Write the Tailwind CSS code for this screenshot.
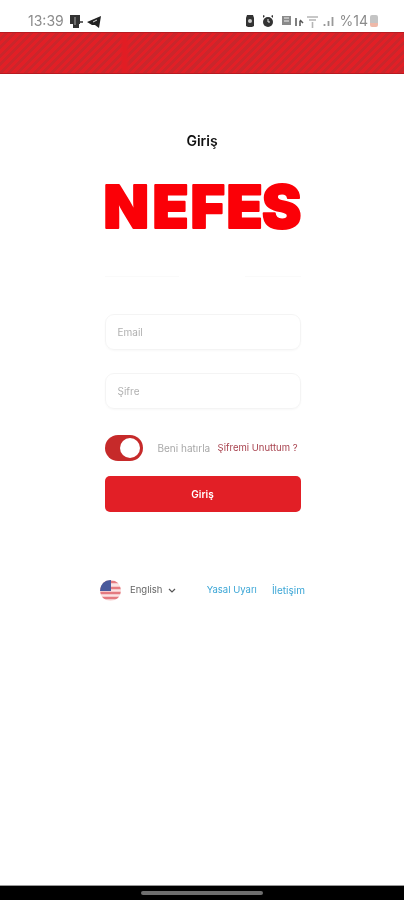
<!DOCTYPE html>
<html lang="en">
<head>
    <meta charset="UTF-8">
    <meta name="viewport" content="width=device-width, initial-scale=1.0">
    <script src="https://cdn.jsdelivr.net/npm/@tailwindcss/browser@4"></script>
    <title>Nefes</title>
</head>
<body class="bg-white font-['Inter','Liberation_Sans',sans-serif]">
<div class="w-[404px] h-[900px] flex flex-col overflow-hidden blur-[0.4px]">

    <!-- status bar -->
    <div class="h-[32px] flex items-center pl-[28px] pr-[26px] pt-[12px] pb-[2px] text-[#8b8b8b]">
        <span class="text-[14px] leading-none">13:39</span>
        <svg class="ml-[5px]" width="15" height="15" viewBox="0 0 15 15"><path d="M1 1h10v9H10v4H4v-4H1z" fill="#333"/><path d="M11 7h3v2h-3z" fill="#666"/><path d="M6 3v8" stroke="#aaa"/></svg>
        <svg class="ml-[2px]" width="16" height="13" viewBox="0 0 16 13"><path d="M1 7 15 1l-2 12-4-3-3 0z" fill="#222"/><path d="M7 7l4-2" stroke="#ddd"/></svg>
        <div class="ml-auto flex items-center">
            <svg width="10" height="14" viewBox="0 0 10 14"><path d="M2 1h6l1 3v8l-2 1H3l-2-1V4z" fill="#333"/><circle cx="5" cy="7" r="2" fill="#ccc"/></svg>
            <svg class="ml-[7px]" width="12" height="12" viewBox="0 0 12 12"><path d="M1 0 3 1 1 3zM11 0 9 1l2 2z" fill="#333"/><circle cx="6" cy="7" r="5" fill="#333"/><path d="M6 4v3h2" stroke="#eee" fill="none"/></svg>
            <svg class="ml-[7px]" width="23" height="12" viewBox="0 0 23 12"><path d="M1 1h9v9H1z" fill="#8a8a8a"/><path d="M3 3h5M3 6h5" stroke="#eee"/><path d="M15 3v8M19 6v5M19 5l3 3" stroke="#555" stroke-width="1.5" fill="none"/></svg>
            <svg class="ml-[2px]" width="13" height="13" viewBox="0 0 13 13"><path d="M1 2h11M3 5h7M6.500 7v6" stroke="#b5b5b5" stroke-width="1.6" fill="none"/></svg>
            <svg class="ml-[4px]" width="11" height="12" viewBox="0 0 11 12"><path d="M1.500 11V9M5.500 11V6M9.500 11V2" stroke="#999" stroke-width="1.8"/></svg>
            <span class="ml-[6px] text-[14px] leading-none">%14</span>
            <div class="ml-[2px] w-[8px] h-[12px] rounded-[2px] bg-gradient-to-b from-[#c4c4c4] from-70% to-[#eeb8a8] to-70%"></div>
        </div>
    </div>

    <!-- red header -->
    <div class="h-[42px] border-y border-[#b81a20] bg-[linear-gradient(90deg,transparent_120px,#e21d24_123px,#e21d24_126px,transparent_130px),repeating-linear-gradient(135deg,#e21f26_0px,#e21f26_3px,#ca262b_3px,#ca262b_6px)]"></div>

    <!-- login -->
    <div class="flex-1 flex flex-col items-center">
        <h1 class="mt-[58px] h-[18px] text-[14px] leading-[18px] font-semibold text-[#111]">Giriş</h1>

        <svg class="mt-[24px] ml-[1px] overflow-visible" width="196" height="60" viewBox="0 0 196 60">
            <text x="-1.500 47.500 85.500 121.500 157" y="54" font-family="Inter" font-weight="900" font-size="59" fill="#fb0007" stroke="#fb0007" stroke-width="2" stroke-linejoin="round">NEFES</text>
        </svg>

        <div class="mt-[42px] w-[196px] ml-[1px] flex justify-between">
            <div class="w-[74px] h-px bg-[#fafafa]"></div>
            <div class="w-[56px] h-px bg-[#fafafa]"></div>
        </div>

        <div class="mt-[37px] w-[196px] ml-[1px] flex flex-col">
            <div class="h-[36px] rounded-[9px] border border-[#f4f4f4] pl-[12px] flex items-center text-[10px] text-[#b0b0b0] shadow-[0_1px_2px_#f8f8f8]">Email</div>
            <div class="mt-[23px] h-[36px] rounded-[9px] border border-[#f4f4f4] pl-[12px] flex items-center text-[10px] text-[#b0b0b0] shadow-[0_1px_2px_#f8f8f8]">Şifre</div>

            <div class="mt-[26px] h-[26px] flex items-center">
                <div class="w-[38px] h-[26px] rounded-full bg-[#c62a2a] flex items-center justify-end pr-[3px]">
                    <div class="w-[20px] h-[20px] rounded-full bg-white"></div>
                </div>
                <span class="ml-[15px] text-[10px] text-[#a8a8a8]">Beni hatırla</span>
                <span class="ml-auto mr-[3px] text-[9.500px] text-[#a8434f] whitespace-nowrap">Şifremi Unuttum ?</span>
            </div>

            <button class="mt-[15px] h-[36px] rounded-[5px] bg-[#e21f26] text-white text-[10px] font-semibold">Giriş</button>
        </div>

        <!-- footer links -->
        <div class="mt-[68px] w-[205px] ml-[1px] flex items-center">
            <svg width="21" height="21" viewBox="0 0 21 21" class="shrink-0">
                <defs><clipPath id="flag"><circle cx="10.500" cy="10.500" r="10.500"/></clipPath></defs>
                <g clip-path="url(#flag)">
                    <rect width="21" height="21" fill="#fbe3e3"/>
                    <path d="M0 2h21M0 8h21M0 13h21M0 18h21" stroke="#e47a80" stroke-width="2.600"/>
                    <rect width="11" height="11" fill="#4a5a9c"/>
                </g>
            </svg>
            <span class="ml-[9px] text-[9.500px] text-[#666]">English</span>
            <svg class="ml-[6px]" width="8" height="6" viewBox="0 0 8 6"><path d="M1 1l3 3 3-3" stroke="#555" fill="none" stroke-width="1.200"/></svg>
            <span class="ml-auto text-[9.500px] text-[#3ba6d6]">Yasal Uyarı</span>
            <span class="ml-[15px] text-[10px] text-[#3ba6d6]">İletişim</span>
        </div>
    </div>

    <!-- nav bar -->
    <div class="h-[15px] bg-black border-t border-[#999] flex justify-center pt-[5px]">
        <div class="w-[122px] h-[4px] rounded-full bg-[#6e6e6e]"></div>
    </div>
</div>
</body>
</html>
